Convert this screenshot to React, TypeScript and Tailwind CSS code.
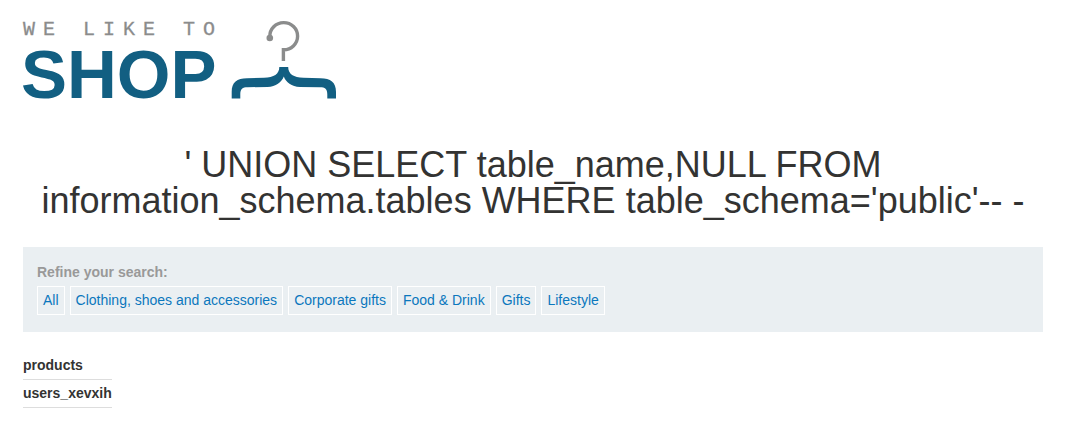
const categories = [
  "All",
  "Clothing, shoes and accessories",
  "Corporate gifts",
  "Food & Drink",
  "Gifts",
  "Lifestyle",
];

const results = ["products", "users_xevxih"];

function Logo() {
  return (
    <svg
      className="block overflow-visible"
      width="314"
      height="84"
      viewBox="23 18 314 84"
      role="img"
      aria-label="We like to shop"
    >
      <text
        x="23"
        y="35"
        fill="#8b8c8c"
        stroke="#8b8c8c"
        strokeWidth="0.3"
        className="font-['Liberation_Mono',monospace] text-[20px] tracking-[8px]"
      >
        WE LIKE TO
      </text>
      <text
        x="21"
        y="98"
        fill="#125f82"
        className="font-['Liberation_Sans',Arial,sans-serif] text-[69px] font-bold"
      >
        SHOP
      </text>
      <path
        d="M269.8 38 V36.5 A13.9 13.6 0 1 1 283.4 49.8 V61"
        fill="none"
        stroke="#8b8c8c"
        strokeWidth="3.4"
      />
      <circle cx="269.8" cy="38" r="3.3" fill="#8b8c8c" />
      <path
        d="M231.7 98.5 V92 C231.7 82 237 78.3 247 78.2 L264 77.8 C274 77.5 279.3 74 279.3 67 H288.2 C288.2 74 293.5 77.5 303.5 77.8 L320.5 78.2 C330.5 78.3 336 82 336 92 V98.5 H327.3 V94.5 C327.3 89 325 87.2 320 87.2 L300 87 C291.5 86.5 286 82.5 283.8 76.5 C281.5 82.5 276 86.5 267.5 87 L247.5 87.2 C242.5 87.2 240.3 89 240.3 94.5 V98.5 Z"
        fill="#125f82"
      />
    </svg>
  );
}

export default function App() {
  return (
    <div className="min-h-screen bg-white pt-[18px] pr-7 pb-8 pl-[23px] font-['Liberation_Sans',Arial,sans-serif] text-[14px] leading-[18px] text-[#333332]">
      <header>
        <a href="#home" className="inline-block align-top">
          <Logo />
        </a>
      </header>
      <main>
        <h1 className="mt-[45px] text-center text-[36px] leading-[36px]">
          ' UNION SELECT table_name,NULL FROM information_schema.tables WHERE
          table_schema='public'-- -
        </h1>
        <nav
          aria-label="Refine your search"
          className="mt-7 bg-[#eaeff2] px-[14px] pt-4 pb-[17px]"
        >
          <p className="font-bold text-[#999999]">Refine your search:</p>
          <ul className="mt-[5px] flex flex-wrap gap-[5px]">
            {categories.map((name) => (
              <li key={name} className="flex">
                <a
                  href="#filter"
                  className="border border-white p-[5px] leading-[17px] text-[#0b77bd]"
                >
                  {name}
                </a>
              </li>
            ))}
          </ul>
        </nav>
        <table className="mt-5 border-collapse">
          <tbody>
            {results.map((name) => (
              <tr key={name} className="border-b border-[#dddddd]">
                <th
                  scope="row"
                  className="pt-1 pb-[5px] text-left font-bold"
                >
                  {name}
                </th>
              </tr>
            ))}
          </tbody>
        </table>
      </main>
    </div>
  );
}
